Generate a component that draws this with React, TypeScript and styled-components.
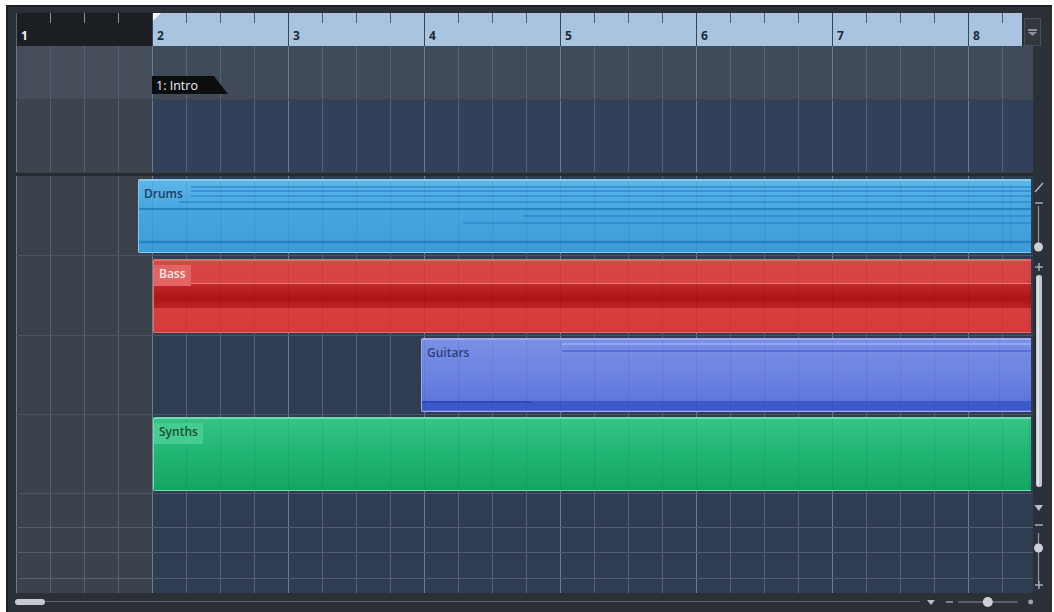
import styled, { createGlobalStyle } from "styled-components";

const BEAT = 34;
const BAR = BEAT * 4;
const LANE_W = 1017;

const GlobalStyle = createGlobalStyle`
  html, body {
    margin: 0;
    padding: 0;
    background: #ffffff;
  }
  body {
    font-family: "Open Sans", "Noto Sans", sans-serif;
  }
`;

const Frame = styled.div`
  margin: 5px 0 0 6px;
  width: 1046px;
  height: 607px;
  box-sizing: border-box;
  padding: 6px 2px 0 8px;
  background: #2b3036;
  border-left: 2px solid #1c2025;
  border-top: 2px solid #1c2025;
  display: flex;
  flex-direction: column;
  overflow: hidden;
`;

const RulerRow = styled.div`
  display: flex;
  align-items: flex-start;
  gap: 2px;
  height: 33px;
`;

const Ruler = styled.div`
  display: flex;
  width: 1006px;
  height: 33px;
  overflow: hidden;
`;

const BarCell = styled.div<{ $dark?: boolean; $w?: number }>`
  position: relative;
  flex: 0 0 ${(p) => p.$w ?? BAR}px;
  box-sizing: border-box;
  height: 100%;
  display: flex;
  align-items: flex-end;
  padding: 0 0 3px 4px;
  border-left: 1px solid ${(p) => (p.$dark ? "#5d636b" : "#32465c")};
  background-color: ${(p) => (p.$dark ? "#1b1e23" : "#a9c4e0")};
  background-image: repeating-linear-gradient(
    to right,
    transparent 0 ${BEAT - 1}px,
    ${(p) => (p.$dark ? "#8d939b" : "#4b5f76")} ${BEAT - 1}px ${BEAT}px
  );
  background-size: 100% 10px;
  background-repeat: no-repeat;
  font-weight: 700;
  font-size: 12px;
  line-height: 14px;
  color: ${(p) => (p.$dark ? "#f2f4f6" : "#1d2b3b")};
`;

const LocatorFlag = styled.span`
  position: absolute;
  top: 0;
  left: 0;
  width: 0;
  height: 0;
  border-top: 8px solid #f4f7fa;
  border-right: 8px solid transparent;
`;

const CornerButton = styled.div`
  width: 17px;
  height: 28px;
  margin-top: 5px;
  box-sizing: border-box;
  background: #33383f;
  border: 1px solid #4a5058;
  display: flex;
  align-items: center;
  justify-content: center;
`;

const Body = styled.div`
  display: flex;
  height: 547px;
`;

const Lanes = styled.div`
  width: ${LANE_W}px;
  display: flex;
  flex-direction: column;
  background-color: #2f3c51;
`;

const Row = styled.div<{ $h: number; $left: string; $right: string; $line?: string }>`
  position: relative;
  flex: 0 0 ${(p) => p.$h}px;
  box-sizing: border-box;
  border-bottom: 1px solid ${(p) => p.$line ?? "#4a5567"};
  background-image:
    repeating-linear-gradient(to right, #6f7c8e 0 1px, transparent 1px ${BAR}px),
    repeating-linear-gradient(to right, #566274 0 1px, transparent 1px ${BEAT}px),
    linear-gradient(to right, ${(p) => p.$left} 0 ${BAR}px, ${(p) => p.$right} ${BAR}px);
`;

const Separator = styled.div`
  flex: 0 0 3px;
  background: #262b32;
`;

const Marker = styled.div`
  position: absolute;
  left: ${BAR}px;
  top: 30px;
  height: 18px;
  padding: 0 30px 0 4px;
  display: flex;
  align-items: center;
  background: #0c0d0f;
  clip-path: polygon(0 0, calc(100% - 14px) 0, 100% 100%, 0 100%);
  color: #f1f3f5;
  font-size: 12.5px;
  font-weight: 500;
`;

const Region = styled.div<{ $x: number; $top?: number; $bg: string; $edge: string }>`
  position: absolute;
  left: ${(p) => p.$x}px;
  top: ${(p) => p.$top ?? 2}px;
  width: ${(p) => LANE_W - 2 - p.$x}px;
  height: 74px;
  box-sizing: border-box;
  border-top: 2px solid ${(p) => p.$edge};
  border-bottom: 1px solid ${(p) => p.$edge};
  border-left: 1px solid ${(p) => p.$edge};
  border-radius: 2px 0 0 2px;
  background: ${(p) => p.$bg};
  overflow: hidden;

  &::after {
    content: "";
    position: absolute;
    inset: 0;
    background: repeating-linear-gradient(
      to right,
      rgba(0, 0, 0, 0.07) 0 1px,
      transparent 1px ${BEAT}px
    );
    background-position: ${(p) => -((p.$x % BEAT) + 1)}px 0;
    pointer-events: none;
  }
`;

const Lines = styled.svg`
  position: absolute;
  inset: 0;
  width: 100%;
  height: 100%;
`;

const Label = styled.span<{ $color: string; $bg?: string }>`
  position: relative;
  z-index: 1;
  display: inline-block;
  padding: 0 5px 4px 5px;
  background: ${(p) => p.$bg ?? "transparent"};
  color: ${(p) => p.$color};
  font-size: 12px;
  font-weight: 600;
  line-height: 17px;
`;

const BassBand = styled.div`
  position: absolute;
  left: 0;
  right: 0;
  top: 22px;
  height: 24px;
  border-top: 1px solid #ea7a78;
  background: linear-gradient(#c3282a, #ad1416 60%, #bd2325);
`;

const VScroll = styled.div`
  width: 17px;
  height: 100%;
  background: #2b3139;
`;

const HScroll = styled.div`
  flex: 1;
  display: flex;
  align-items: center;
  padding-bottom: 2px;
`;

const HThumb = styled.div`
  width: 30px;
  height: 6px;
  margin-left: -1px;
  border-radius: 3px;
  background: #c5c9cf;
`;

const HTrack = styled.div`
  width: 878px;
  height: 1px;
  background: #5f6772;
`;

const bars = [1, 2, 3, 4, 5, 6, 7, 8];

const LEFT_GRAY = "#3b424c";
const RIGHT_BLUE = "#2f3c51";

const App = () => {
  return (
    <>
      <GlobalStyle />
      <Frame>
        <RulerRow>
          <Ruler>
            {bars.map((b) => (
              <BarCell key={b} $dark={b === 1} $w={b === 8 ? 1006 - BAR * 7 : BAR}>
                {b === 2 && <LocatorFlag />}
                {b}
              </BarCell>
            ))}
          </Ruler>
          <CornerButton>
            <svg width="9" height="7" viewBox="0 0 9 7">
              <rect x="0" y="0" width="9" height="2" fill="#8a9099" />
              <polygon points="0,3 9,3 4.5,7" fill="#8a9099" />
            </svg>
          </CornerButton>
        </RulerRow>

        <Body>
          <Lanes>
            <Row $h={54} $left="#464e59" $right="#404a58" $line="#3f4752">
              <Marker>1: Intro</Marker>
            </Row>
            <Row $h={73} $left="#3d444e" $right="#334059" $line="#3a414b" />
            <Separator />

            <Row $h={80} $left={LEFT_GRAY} $right={RIGHT_BLUE}>
              <Region
                $x={122}
                $top={3}
                $bg="linear-gradient(#5cb6e9, #47a6e0 40%, #3c9cd9)"
                $edge="#86c9f0"
              >
                <Lines>
                  <g stroke="#2f8acb" strokeWidth="1.5">
                    <line x1="52" y1="6" x2="900" y2="6" />
                    <line x1="52" y1="10" x2="900" y2="10" />
                    <line x1="52" y1="15" x2="900" y2="15" />
                    <line x1="40" y1="21" x2="900" y2="21" />
                    <line x1="384" y1="35" x2="900" y2="35" />
                    <line x1="324" y1="42" x2="900" y2="42" />
                  </g>
                  <line x1="0" y1="28" x2="900" y2="28" stroke="#2a82c2" strokeWidth="2" />
                  <line x1="0" y1="61" x2="900" y2="61" stroke="#2a82c2" strokeWidth="2.5" />
                </Lines>
                <Label $color="#1c3d60">Drums</Label>
              </Region>
            </Row>

            <Row $h={80} $left={LEFT_GRAY} $right={RIGHT_BLUE}>
              <Region
                $x={137}
                $top={3}
                $bg="linear-gradient(#d94646, #d84343 30%, #d63b3b)"
                $edge="#e76b69"
              >
                <BassBand />
                <Label $color="#fbeaea" $bg="#e36563">
                  Bass
                </Label>
              </Region>
            </Row>

            <Row $h={79} $left={LEFT_GRAY} $right={RIGHT_BLUE}>
              <Region
                $x={405}
                $top={2}
                $bg="linear-gradient(#7a90e6, #6a82e0 55%, #5670d8)"
                $edge="#9aaaf0"
              >
                <Lines>
                  <line x1="140" y1="4" x2="700" y2="4" stroke="#93a6f0" strokeWidth="2" />
                  <line x1="140" y1="11" x2="700" y2="11" stroke="#4c64d0" strokeWidth="1.5" />
                  <rect x="0" y="61" width="700" height="9" fill="#3d58ca" />
                  <line x1="0" y1="62" x2="110" y2="62" stroke="#2a44b6" strokeWidth="1.5" />
                </Lines>
                <Label $color="#2f3f7c">Guitars</Label>
              </Region>
            </Row>

            <Row $h={79} $left={LEFT_GRAY} $right={RIGHT_BLUE}>
              <Region
                $x={137}
                $top={2}
                $bg="linear-gradient(#35c586, #22b675 45%, #13a663)"
                $edge="#6fdcaa"
              >
                <Label $color="#1f4d38" $bg="#45cc91">
                  Synths
                </Label>
              </Region>
            </Row>

            <Row $h={34} $left={LEFT_GRAY} $right={RIGHT_BLUE} $line="#525d6e" />
            <Row $h={25} $left={LEFT_GRAY} $right={RIGHT_BLUE} $line="#525d6e" />
            <Row $h={26} $left={LEFT_GRAY} $right={RIGHT_BLUE} $line="#525d6e" />
            <Row $h={15} $left={LEFT_GRAY} $right={RIGHT_BLUE} $line="#2b3139" />
          </Lanes>

          <VScroll>
            <svg width="17" height="547" viewBox="0 0 17 547">
              <g stroke="#b9bec6" strokeWidth="1.3" fill="none">
                <line x1="2" y1="146" x2="10" y2="137" />
                <line x1="2" y1="157" x2="10" y2="157" />
                <line x1="5.5" y1="160" x2="5.5" y2="197" stroke="#8a9099" />
                <line x1="2" y1="221" x2="10" y2="221" />
                <line x1="6" y1="217" x2="6" y2="225" />
                <line x1="2" y1="479" x2="10" y2="479" />
                <line x1="5.5" y1="487" x2="5.5" y2="536" stroke="#8a9099" />
                <line x1="2" y1="539" x2="10" y2="539" />
                <line x1="6" y1="535" x2="6" y2="543" />
              </g>
              <circle cx="5.5" cy="201" r="4.5" fill="#cdd1d7" />
              <rect x="3" y="229" width="6" height="212" rx="2.5" fill="#c2c6cd" />
              <rect x="4" y="231" width="2" height="208" fill="#dfe2e6" />
              <polygon points="1.5,459 10,459 5.8,465" fill="#b9bec6" />
              <circle cx="5.5" cy="502" r="4.5" fill="#cdd1d7" />
            </svg>
          </VScroll>
        </Body>

        <HScroll>
          <HThumb />
          <HTrack />
          <svg width="130" height="14" viewBox="0 0 130 14">
            <polygon points="7,5 15,5 11,10" fill="#b9bec6" />
            <line x1="26" y1="7" x2="33" y2="7" stroke="#9aa0a8" strokeWidth="1.5" />
            <line x1="38" y1="7" x2="98" y2="7" stroke="#8a9099" strokeWidth="1.2" />
            <circle cx="68" cy="7" r="5" fill="#cdd1d7" />
            <circle cx="111" cy="7" r="2.5" fill="#9aa0a8" />
          </svg>
        </HScroll>
      </Frame>
    </>
  );
};

export default App;
